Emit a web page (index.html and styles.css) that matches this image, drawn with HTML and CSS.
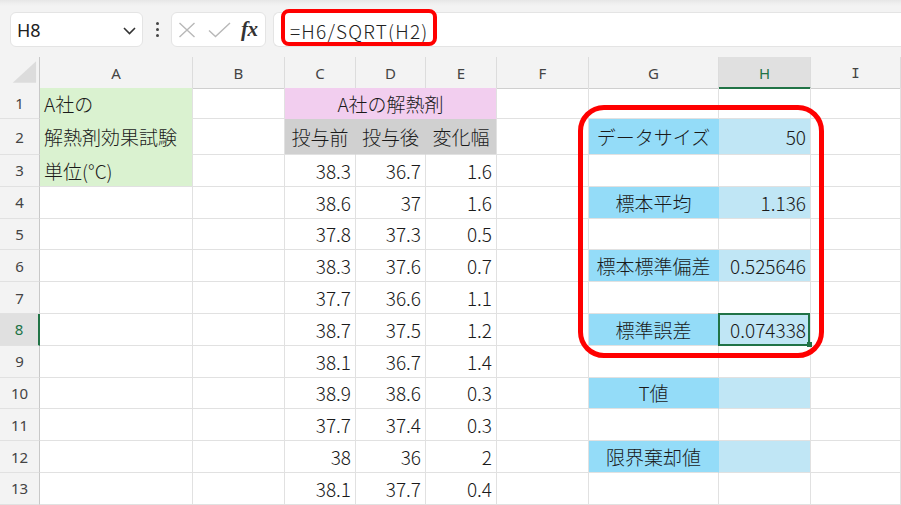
FILE: index.html
```html
<!DOCTYPE html>
<html lang="ja">
<head>
<meta charset="utf-8">
<title>Excel</title>
<link rel="stylesheet" href="styles.css">
</head>
<body>
<div class="toolbar">
  <div class="box namebox">
    <span class="name">H8</span>
    <svg class="chev" width="13" height="8" viewBox="0 0 13 8"><polyline points="1,1 6.5,6.5 12,1" fill="none" stroke="#333" stroke-width="1.6"/></svg>
  </div>
  <div class="dots"><i></i><i></i><i></i></div>
  <div class="box fnbox">
    <svg width="18" height="16" viewBox="0 0 18 16"><path d="M1.5 1 L16.5 15 M16.5 1 L1.5 15" stroke="#b8b8b8" stroke-width="1.4" fill="none"/></svg>
    <svg width="23" height="16" viewBox="0 0 23 16"><polyline points="1,8.5 7.5,14.5 22,1" stroke="#b8b8b8" stroke-width="1.4" fill="none"/></svg>
    <span class="fx">fx</span>
  </div>
  <div class="box formula"><span class="ftext">=H6/SQRT(H2)</span></div>
</div>

<div class="sheet">
  <div class="row head">
    <div class="corner"><svg width="40" height="31" viewBox="0 0 40 31"><polygon points="13,26 37,26 37,4" fill="#dcdcdc"/></svg></div>
    <div class="ch">A</div><div class="ch">B</div><div class="ch">C</div><div class="ch">D</div><div class="ch">E</div><div class="ch">F</div><div class="ch">G</div><div class="ch sel">H</div><div class="ch"><span class="serifI">I</span></div>
  </div>

  <div class="row r1">
    <div class="rh">1</div>
    <div class="c lft f-green in-b">A社の</div>
    <div class="c"></div>
    <div class="c ctr f-pink span3">A社の解熱剤</div>
    <div class="c"></div><div class="c"></div><div class="c"></div><div class="c"></div>
  </div>

  <div class="row r2">
    <div class="rh">2</div>
    <div class="c lft f-green in-b">解熱剤効果試験</div>
    <div class="c"></div>
    <div class="c ctr f-grey in-r">投与前</div>
    <div class="c ctr f-grey in-r">投与後</div>
    <div class="c ctr f-grey">変化幅</div>
    <div class="c"></div>
    <div class="c ctr f-blue in-r">データサイズ</div>
    <div class="c num f-lblue">50</div>
    <div class="c"></div>
  </div>

  <div class="row">
    <div class="rh">3</div>
    <div class="c lft f-green">単位(°C)</div>
    <div class="c"></div>
    <div class="c num">38.3</div><div class="c num">36.7</div><div class="c num">1.6</div>
    <div class="c"></div><div class="c"></div><div class="c"></div><div class="c"></div>
  </div>

  <div class="row">
    <div class="rh">4</div>
    <div class="c"></div><div class="c"></div>
    <div class="c num">38.6</div><div class="c num">37</div><div class="c num">1.6</div>
    <div class="c"></div>
    <div class="c ctr f-blue in-r">標本平均</div>
    <div class="c num f-lblue">1.136</div>
    <div class="c"></div>
  </div>

  <div class="row">
    <div class="rh">5</div>
    <div class="c"></div><div class="c"></div>
    <div class="c num">37.8</div><div class="c num">37.3</div><div class="c num">0.5</div>
    <div class="c"></div><div class="c"></div><div class="c"></div><div class="c"></div>
  </div>

  <div class="row">
    <div class="rh">6</div>
    <div class="c"></div><div class="c"></div>
    <div class="c num">38.3</div><div class="c num">37.6</div><div class="c num">0.7</div>
    <div class="c"></div>
    <div class="c ctr f-blue in-r">標本標準偏差</div>
    <div class="c num f-lblue">0.525646</div>
    <div class="c"></div>
  </div>

  <div class="row">
    <div class="rh">7</div>
    <div class="c"></div><div class="c"></div>
    <div class="c num">37.7</div><div class="c num">36.6</div><div class="c num">1.1</div>
    <div class="c"></div><div class="c"></div><div class="c"></div><div class="c"></div>
  </div>

  <div class="row">
    <div class="rh selrow">8</div>
    <div class="c"></div><div class="c"></div>
    <div class="c num">38.7</div><div class="c num">37.5</div><div class="c num">1.2</div>
    <div class="c"></div>
    <div class="c ctr f-blue in-r">標準誤差</div>
    <div class="c num f-lblue active">0.074338</div>
    <div class="c"></div>
  </div>

  <div class="row">
    <div class="rh">9</div>
    <div class="c"></div><div class="c"></div>
    <div class="c num">38.1</div><div class="c num">36.7</div><div class="c num">1.4</div>
    <div class="c"></div><div class="c"></div><div class="c"></div><div class="c"></div>
  </div>

  <div class="row">
    <div class="rh">10</div>
    <div class="c"></div><div class="c"></div>
    <div class="c num">38.9</div><div class="c num">38.6</div><div class="c num">0.3</div>
    <div class="c"></div>
    <div class="c ctr f-blue in-r">T値</div>
    <div class="c num f-lblue"></div>
    <div class="c"></div>
  </div>

  <div class="row">
    <div class="rh">11</div>
    <div class="c"></div><div class="c"></div>
    <div class="c num">37.7</div><div class="c num">37.4</div><div class="c num">0.3</div>
    <div class="c"></div><div class="c"></div><div class="c"></div><div class="c"></div>
  </div>

  <div class="row">
    <div class="rh">12</div>
    <div class="c"></div><div class="c"></div>
    <div class="c num">38</div><div class="c num">36</div><div class="c num">2</div>
    <div class="c"></div>
    <div class="c ctr f-blue in-r">限界棄却値</div>
    <div class="c num f-lblue"></div>
    <div class="c"></div>
  </div>

  <div class="row">
    <div class="rh">13</div>
    <div class="c"></div><div class="c"></div>
    <div class="c num">38.1</div><div class="c num">37.7</div><div class="c num">0.4</div>
    <div class="c"></div><div class="c"></div><div class="c"></div><div class="c"></div>
  </div>
</div>

<div class="mark mark-formula"></div>
<div class="mark mark-stats"></div>
</body>
</html>
```

FILE: styles.css
```css
html, body {
  margin: 0;
  padding: 0;
}
body {
  width: 901px;
  height: 505px;
  overflow: hidden;
  background: #ffffff;
  position: relative;
  font-family: "Noto Sans CJK JP", "Noto Sans", sans-serif;
  color: #1f1f1f;
}

/* ---------- toolbar ---------- */
.toolbar {
  height: 57px;
  box-sizing: border-box;
  padding-top: 12px;
  display: flex;
  align-items: flex-start;
  background: linear-gradient(#e6e6e6 0px, #eeeeee 3px, #f3f3f3 6px, #f3f3f3 100%);
}
.box {
  height: 35px;
  box-sizing: border-box;
  background: #ffffff;
  border: 1px solid #e4e4e4;
  border-radius: 6px;
  display: flex;
  align-items: center;
}
.namebox {
  margin-left: 10px;
  width: 133px;
  padding: 0 6px 0 6px;
  justify-content: space-between;
}
.name {
  font-family: "Noto Sans", sans-serif;
  font-size: 18px;
  color: #222;
  padding-top: 1px;
}
.chev {
  margin-top: 2px;
}
.dots {
  width: 28px;
  height: 35px;
  display: flex;
  flex-direction: column;
  align-items: center;
  justify-content: center;
  gap: 3px;
}
.dots i {
  display: block;
  width: 3px;
  height: 3px;
  border-radius: 50%;
  background: #444;
}
.fnbox {
  width: 95px;
  padding-left: 6px;
  gap: 12px;
}
.fx {
  font-family: "Liberation Serif", serif;
  font-style: italic;
  font-weight: bold;
  font-size: 21px;
  color: #333;
  margin-left: -2px;
  letter-spacing: -0.5px;
}
.formula {
  flex: 1;
  margin-left: 7px;
  border-right: none;
  border-radius: 6px 0 0 6px;
  padding-left: 16px;
}
.ftext {
  font-size: 19px;
  font-weight: 300;
  letter-spacing: 1.2px;
  color: #222;
  padding-top: 1px;
}

/* ---------- sheet ---------- */
.row {
  display: grid;
  grid-template-columns: 40px 153px 92px 71px 70px 71px 92px 130px 92px 90px;
  height: 31.8px;
}
.row.head { height: 31px; }
.row.r1 { height: 31px; }
.row.r2 { height: 36px; }

.corner, .ch, .rh {
  box-sizing: border-box;
  background: #f3f3f3;
  font-family: "Noto Sans", sans-serif;
  font-size: 15px;
  color: #444;
  display: flex;
  align-items: center;
  justify-content: center;
}
.corner {
  border-right: 1px solid #c8c8c8;
  border-bottom: 1px solid #cfcfcf;
}
.corner svg { display: block; }
.ch {
  border-right: 1px solid #dcdcdc;
  border-bottom: 1px solid #cfcfcf;
  padding-top: 1px;
}
.ch.sel {
  background: #e0e0e0;
  color: #217346;
  border-bottom: 2px solid #217346;
}
.serifI {
  font-family: "DejaVu Sans Mono", monospace;
  font-size: 14px;
}
.rh {
  border-right: 1px solid #c8c8c8;
  border-bottom: 1px solid #e1e1e1;
}
.rh.selrow {
  background: #e0e0e0;
  color: #217346;
  border-right: 2px solid #217346;
}

.c {
  box-sizing: border-box;
  border-right: 1px solid #e1e1e1;
  border-bottom: 1px solid #e1e1e1;
  font-size: 19px;
  font-weight: 300;
  color: #1a1a1a;
  display: flex;
  align-items: center;
  white-space: nowrap;
  overflow: visible;
  position: relative;
}
.lft { padding-left: 4px; justify-content: flex-start; }
.num { padding-right: 4px; justify-content: flex-end; }
.ctr { justify-content: center; }
.span3 { grid-column: span 3; }

.f-green { background: #daf2d0; }
.f-pink  { background: #f2ceef; border-bottom-color: #f2ceef; }
.f-grey  { background: #d0d0d0; }
.f-blue  { background: #94dcf8; }
.f-lblue { background: #c0e6f5; }

.f-green.in-b { border-bottom-color: #daf2d0; }
.f-grey.in-r { border-right-color: #d0d0d0; }
.f-blue.in-r { border-right-color: #94dcf8; }

/* active cell */
.active::after {
  content: "";
  position: absolute;
  top: -1px;
  left: -1px;
  right: 0;
  bottom: -1px;
  border: 2px solid #217346;
  pointer-events: none;
}
.active::before {
  content: "";
  position: absolute;
  right: -2px;
  bottom: -2px;
  width: 5px;
  height: 5px;
  background: #217346;
  z-index: 2;
}

/* ---------- red annotation marks ---------- */
.mark {
  position: absolute;
  box-sizing: border-box;
  border: 4px solid #ff0000;
  pointer-events: none;
}
.mark-formula {
  left: 281px;
  top: 9px;
  width: 156px;
  height: 37px;
  border-radius: 8px;
}
.mark-stats {
  left: 578px;
  top: 105px;
  width: 246px;
  height: 253px;
  border-width: 5px;
  border-radius: 26px;
}
```
